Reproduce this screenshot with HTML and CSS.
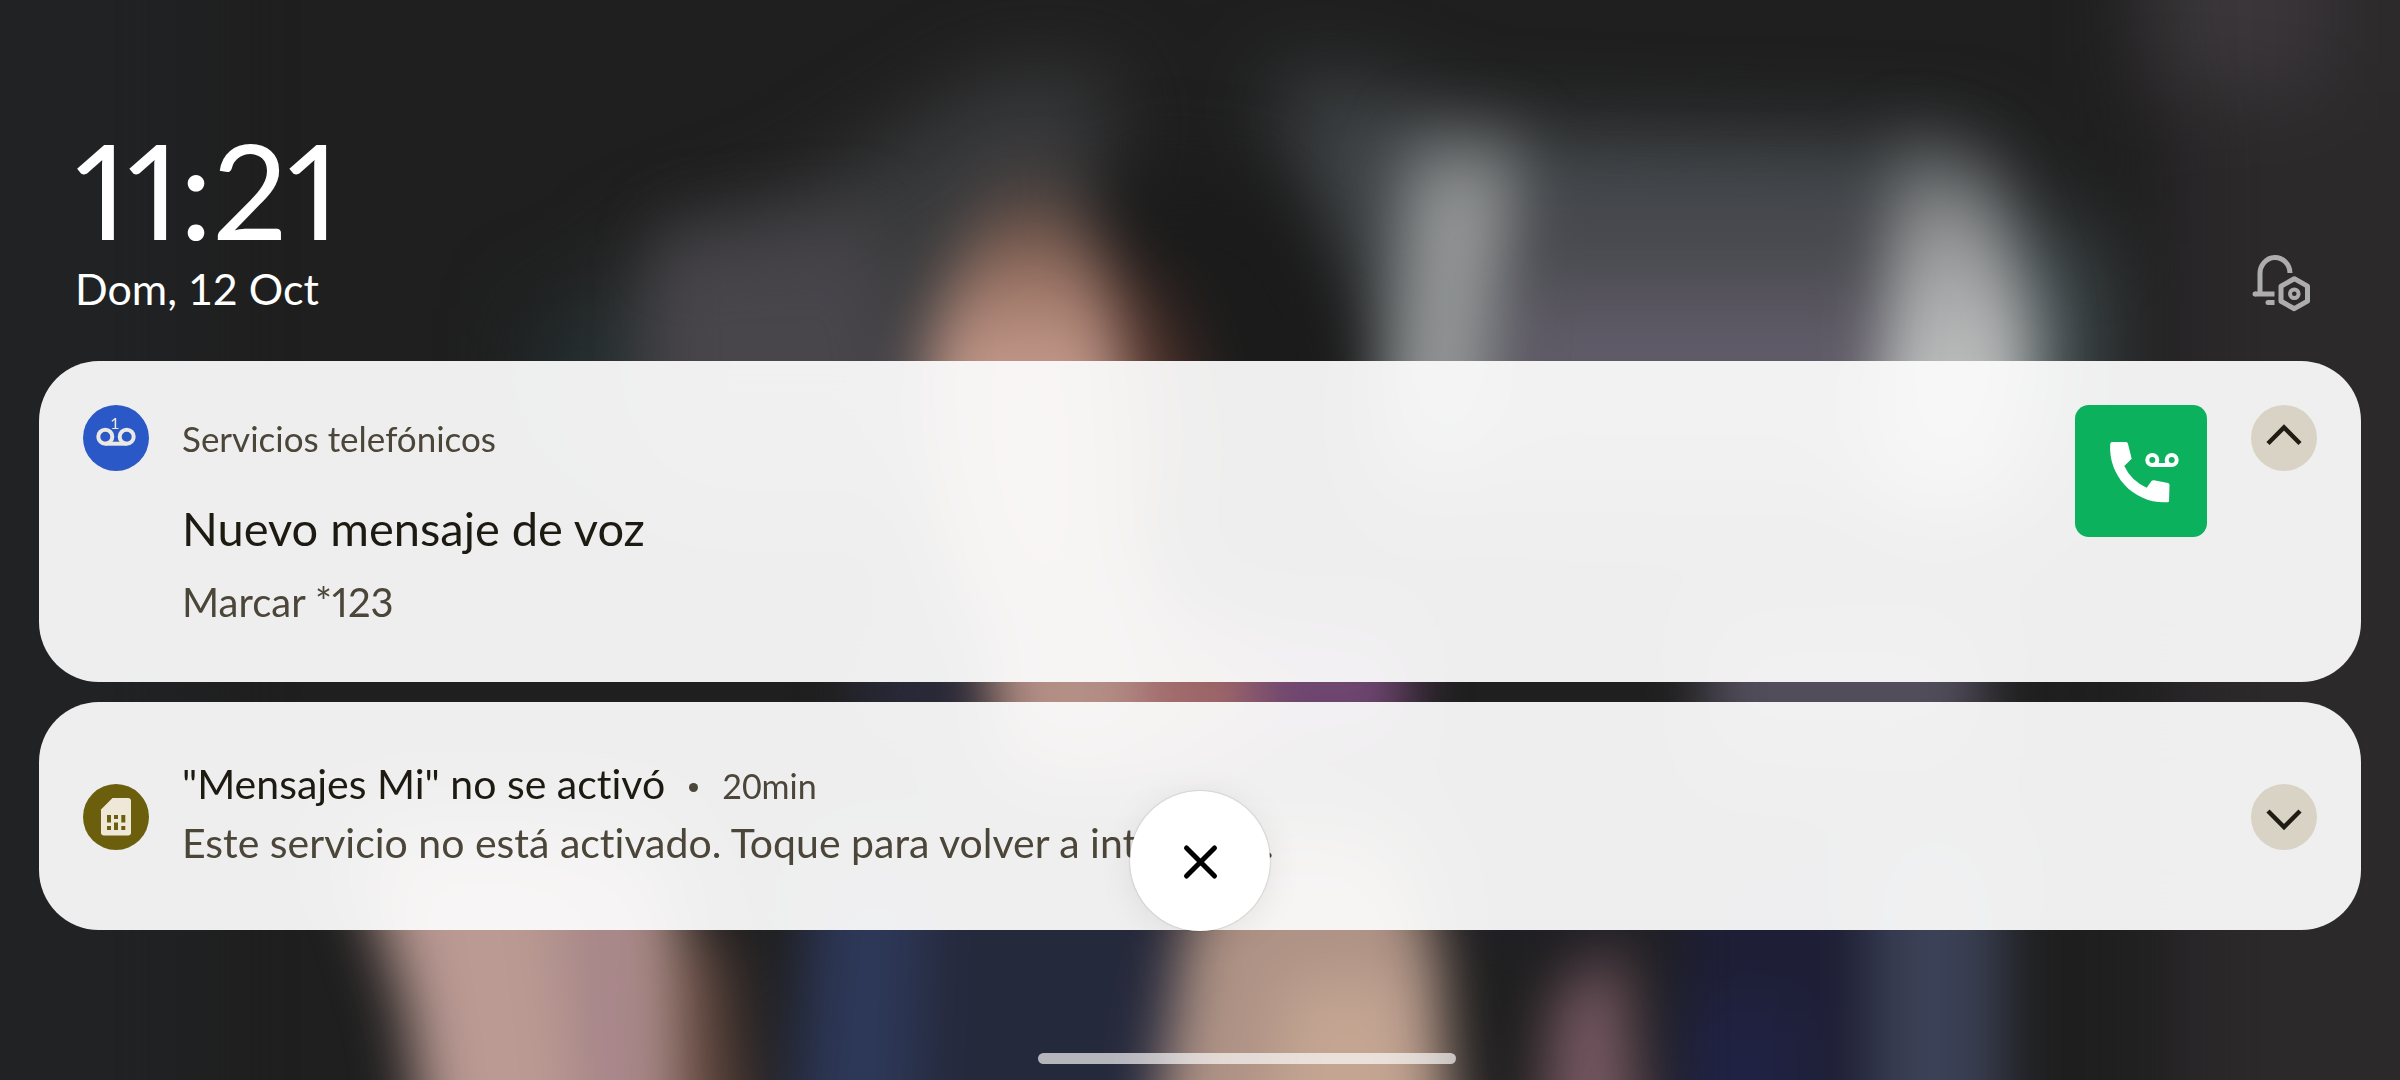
FILE: index.html
```html
<!DOCTYPE html>
<html lang="es">
<head>
<meta charset="utf-8">
<meta name="viewport" content="width=device-width, initial-scale=1">
<title>Notificaciones</title>
<link rel="stylesheet" href="styles.css">
</head>
<body>
<svg class="wallpaper" viewBox="0 0 1568 706" preserveAspectRatio="none" aria-hidden="true">
  <defs>
    <filter id="soft" x="-50%" y="-50%" width="200%" height="200%" color-interpolation-filters="sRGB"><feGaussianBlur stdDeviation="19 26"/></filter>
    <filter id="side" x="-50%" y="-50%" width="200%" height="200%" color-interpolation-filters="sRGB"><feGaussianBlur stdDeviation="18 20"/></filter>
    <filter id="wide" x="-50%" y="-50%" width="200%" height="200%" color-interpolation-filters="sRGB"><feGaussianBlur stdDeviation="28"/></filter>
    <linearGradient id="skin" gradientUnits="userSpaceOnUse" x1="0" y1="130" x2="0" y2="240"><stop offset="0" stop-color="#5c4339"/><stop offset=".5" stop-color="#a07868"/><stop offset="1" stop-color="#c49a8c"/></linearGradient>
    <linearGradient id="glow" gradientUnits="userSpaceOnUse" x1="0" y1="100" x2="0" y2="240"><stop offset="0" stop-color="#66696b"/><stop offset=".5" stop-color="#a0a1a2"/><stop offset="1" stop-color="#bcbdbd"/></linearGradient>
  </defs>
  <rect width="1568" height="706" fill="#1f1f1f"/>
  <g filter="url(#wide)">
    <rect x="-80" y="-80" width="210" height="860" fill="#212224"/>
    <rect x="1420" y="-80" width="260" height="900" fill="#2c292b"/>
    <rect x="1400" y="-80" width="120" height="140" fill="#3a3639"/>
    <path d="M390 300L410 170L520 130L650 50L730 50L710 180L620 300Z" fill="#3a3b3d"/>
    <path d="M830 50L900 60L960 85L1290 95L1350 160L1370 300L900 300L870 160Z" fill="#43484b"/>
    <rect x="350" y="200" width="60" height="80" fill="#232f31"/>
    <rect x="1310" y="160" width="60" height="140" fill="#465356"/>
  </g>
  <g filter="url(#soft)">
    <path d="M430 160L570 150L600 320L430 320Z" fill="#48454b"/>
    <rect x="990" y="130" width="240" height="80" fill="#48494e"/>
    <rect x="985" y="190" width="240" height="130" fill="#605b68"/>
    <path d="M750 110L830 120L880 200L895 320L780 320L700 160Z" fill="#1b1b1b"/>
    <path d="M720 160L770 210L800 320L720 320Z" fill="#4c3029"/>
    <path d="M640 150Q680 110 710 150Q745 220 740 440L640 440Q590 280 610 210Z" fill="url(#skin)"/>
    <path d="M920 100L995 100L980 180L970 310L904 310Z" fill="#929495"/>
    <path d="M1240 100L1300 120L1330 220L1315 330L1222 330Z" fill="url(#glow)"/>
  </g>
  <g filter="url(#side)">
    <rect x="560" y="400" width="80" height="90" fill="#292938"/>
    <rect x="650" y="380" width="115" height="130" fill="#b48f86"/>
    <rect x="745" y="410" width="75" height="90" fill="#a0686a"/>
    <rect x="820" y="410" width="100" height="80" fill="#714773"/>
    <rect x="1115" y="400" width="180" height="100" fill="#514d5b"/>
  </g>
  <g filter="url(#side)">
    <path d="M225 540L425 540L450 620L455 800L285 800L265 660Z" fill="#b0928b"/>
    <path d="M265 540L345 540L380 800L305 800L285 660Z" fill="#bc9a94"/>
    <path d="M375 540L405 540L430 800L385 800Z" fill="#a6838a"/>
    <path d="M440 600L475 620L495 800L445 800Z" fill="#5e443b"/>
    <path d="M530 550L770 550L760 800L500 800Z" fill="#25293c"/>
    <path d="M535 550L605 550L595 800L520 800Z" fill="#2d3858"/>
    <path d="M785 540L910 540L940 620L955 800L745 800Z" fill="#ae9285"/>
    <path d="M840 640L920 640L940 800L820 800Z" fill="#c4a592"/>
    <rect x="960" y="550" width="110" height="60" fill="#211f2a"/>
    <path d="M1015 650L1060 620L1080 800L1000 800Z" fill="#755761"/>
    <rect x="1095" y="540" width="125" height="260" fill="#1e1f36"/>
    <rect x="1095" y="660" width="80" height="140" fill="#202244"/>
    <rect x="1222" y="540" width="86" height="260" fill="#3b4156"/>
  </g>
</svg>

<main class="shade">
  <header class="top">
    <div>
      <time class="clock" datetime="11:21">11:21</time>
      <p class="date">Dom, 12 Oct</p>
    </div>
    <button class="plain" type="button" aria-label="Ajustes de notificaciones">
      <svg width="64" height="60" viewBox="0 0 64 60" fill="none" stroke="#adadad" stroke-width="5">
        <path d="M10 41V21A15 16 0 0 1 40 20"/>
        <path d="M5 41H24.500M18 49.500H24.500"/>
        <circle cx="5" cy="41" r="2.500" fill="#adadad" stroke="none"/>
        <circle cx="18" cy="49.500" r="2.500" fill="#adadad" stroke="none"/>
        <path d="M44.300 25.700L57.500 33.200V48.200L44.300 55.700L31 48.200V33.200Z" stroke-linejoin="round"/>
        <circle cx="44.300" cy="40.700" r="4.300" stroke-width="4"/>
      </svg>
    </button>
  </header>

  <section class="list">
    <article class="card open">
      <svg class="badge" viewBox="0 0 66 66" fill="none" aria-hidden="true">
        <circle cx="33" cy="33" r="33" fill="#2b58c7"/>
        <g stroke="#ece8e2" stroke-width="4">
          <circle cx="22.300" cy="31.700" r="7"/>
          <circle cx="43.700" cy="31.700" r="7"/>
          <path d="M22.300 38.700H43.700"/>
        </g>
        <text class="count" x="32" y="24" text-anchor="middle">1</text>
      </svg>
      <div class="body">
        <p class="app">Servicios telefónicos</p>
        <h2 class="headline">Nuevo mensaje de voz</h2>
        <p class="detail">Marcar *123</p>
      </div>
      <svg class="picture" viewBox="0 0 132 132" fill="none" aria-hidden="true">
        <rect width="132" height="132" rx="14" fill="#0bb15d"/>
        <path d="M37 37H51Q52.700 37 53 39L56.700 53.700L49.300 61Q56 75.500 71.700 82.700L76.500 76Q77.500 75 79 75.300L93 78Q94.500 78.500 94.500 80L94 96Q94 97.300 92.500 97.300C59 99 33 71 35.200 39Q35.500 37 37 37Z" fill="#fff"/>
        <g stroke="#fff" stroke-width="4">
          <circle cx="77.300" cy="55" r="5"/>
          <circle cx="96.700" cy="55" r="5"/>
          <path d="M77.300 60H96.700"/>
        </g>
      </svg>
      <button class="toggle" type="button" aria-label="Contraer">
        <svg viewBox="0 0 66 66" fill="none" stroke="#1f1c13" stroke-width="4.500"><path d="M17 38.500L33 22.500L49 38.500"/></svg>
      </button>
    </article>

    <article class="card closed">
      <svg class="badge" viewBox="0 0 66 66" aria-hidden="true">
        <circle cx="33" cy="33" r="33" fill="#6b5f0e"/>
        <path d="M29.500 14H45Q48 14 48 17V48.500Q48 51.500 45 51.500H21Q18 51.500 18 48.500V25.500Z" fill="#efe8d9"/>
        <path d="M24 31h4v7.500h-4zM31 31h4v4h-4zM38.300 31h4v7.500h-4zM24 42h4v4h-4zM31 38.500h4v7.500h-4zM38.300 42h4v4h-4z" fill="#6b5f0e"/>
      </svg>
      <div class="body">
        <div class="line">
          <h2 class="title">"Mensajes Mi" no se activó</h2>
          <span class="dot"></span>
          <span class="age">20min</span>
        </div>
        <p class="summary">Este servicio no está activado. Toque para volver a intentarlo.</p>
      </div>
      <button class="toggle" type="button" aria-label="Expandir">
        <svg viewBox="0 0 66 66" fill="none" stroke="#1f1c13" stroke-width="4.500"><path d="M17 27L33 43L49 27"/></svg>
      </button>
    </article>

    <button class="clear" type="button" aria-label="Borrar todo">
      <svg width="140" height="140" viewBox="0 0 140 140" fill="none" stroke="#000" stroke-width="5" stroke-linecap="round"><path d="M56.500 57L84.500 85M84.500 57L56.500 85"/></svg>
    </button>
  </section>
</main>
<div class="homebar"></div>
</body>
</html>
```
FILE: styles.css
```css
* { box-sizing: border-box; }

body {
  margin: 0;
  min-height: 100vh;
  position: relative;
  overflow: hidden;
  background: #202020;
  color: #1d1a12;
  font-family: Lato, "Noto Sans", sans-serif;
  font-variant-ligatures: no-common-ligatures;
}

h2, p { margin: 0; font-weight: 400; }

button {
  padding: 0;
  border: 0;
  background: none;
  font: inherit;
  cursor: pointer;
}

svg { display: block; }

.wallpaper {
  position: absolute;
  inset: 0;
  width: 100%;
  height: 100%;
}

.shade {
  position: relative;
  padding: 113px 39px 0;
}

.top {
  display: flex;
  justify-content: space-between;
  align-items: flex-end;
  padding: 0 47px 0 36px;
  margin-bottom: 48px;
  color: #fff;
}

.clock {
  display: block;
  font-size: 132px;
  line-height: 152px;
  font-variant-numeric: proportional-nums;
}

.date {
  font-size: 43px;
  line-height: 48px;
}

.list {
  position: relative;
  display: flex;
  flex-direction: column;
  gap: 20px;
}

.card {
  display: flex;
  padding: 44px;
  border-radius: 60px;
  background: rgba(251, 251, 251, 0.945);
  -webkit-backdrop-filter: blur(30px);
  backdrop-filter: blur(30px);
}

.open { padding-bottom: 56px; }

.closed {
  align-items: center;
  padding-top: 55px;
  padding-bottom: 54px;
}

.badge, .toggle {
  flex: none;
  width: 66px;
  height: 66px;
}

.count {
  fill: #ece8e2;
  font-size: 16px;
}

.toggle {
  margin-left: 44px;
  border-radius: 50%;
  background: #d9d3c5;
}

.picture {
  flex: none;
  width: 132px;
  height: 132px;
}

.body {
  flex: 1;
  min-width: 0;
  padding-left: 33px;
}

.app {
  color: #4b4639;
  font-size: 35px;
  line-height: 66px;
}

.headline {
  margin-top: 25px;
  font-size: 47px;
  line-height: 64px;
}

.detail {
  margin-top: 18px;
  color: #4b4639;
  font-size: 40px;
  line-height: 48px;
  font-variant-numeric: proportional-nums;
}

.closed .body { padding-bottom: 6px; }

.line {
  display: flex;
  align-items: baseline;
}

.title, .summary {
  font-size: 41px;
  line-height: 54px;
}

.dot {
  align-self: center;
  width: 9px;
  height: 9px;
  margin: 6px 24px 0;
  border-radius: 50%;
  background: #4b4639;
}

.age {
  color: #4b4639;
  font-size: 34px;
}

.summary {
  margin-top: 5px;
  color: #4b4639;
}

.clear {
  position: absolute;
  left: 50%;
  bottom: -1px;
  width: 140px;
  height: 140px;
  margin-left: -70px;
  border-radius: 50%;
  background: #fff;
  box-shadow: 0 0 2px rgba(0, 0, 0, 0.3), 0 6px 36px rgba(0, 0, 0, 0.08);
}

.homebar {
  position: absolute;
  left: calc(50% + 47px);
  bottom: 16px;
  width: 418px;
  height: 11px;
  margin-left: -209px;
  border-radius: 6px;
  background: rgba(255, 255, 255, 0.66);
}
```
